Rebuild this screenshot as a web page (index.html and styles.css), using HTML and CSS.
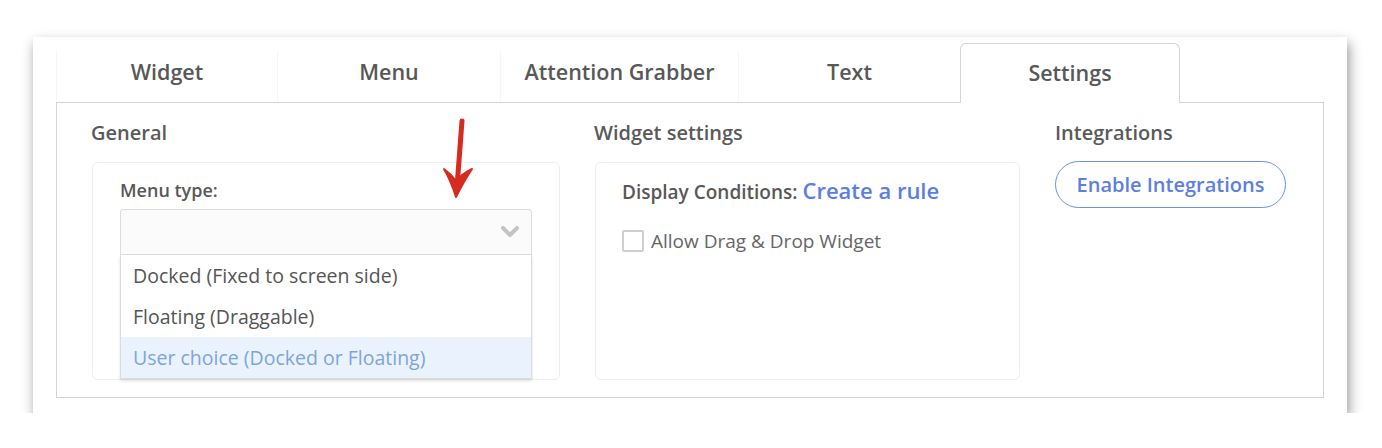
FILE: index.html
```html
<!DOCTYPE html>
<html lang="en">
<head>
    <meta charset="UTF-8">
    <meta name="viewport" content="width=device-width, initial-scale=1.0">
    <title>Widget Settings</title>
    <link rel="stylesheet" href="styles.css">
</head>
<body>
    <div class="frame">
        <!-- Tabs -->
        <div class="tabs">
            <div class="tab tab-widget">Widget</div>
            <div class="tab tab-menu">Menu</div>
            <div class="tab tab-grabber">Attention Grabber</div>
            <div class="tab tab-text">Text</div>
            <div class="tab tab-settings active">Settings</div>
        </div>

        <div class="panel">
            <!-- General -->
            <div class="column col-general">
                <h3>General</h3>
                <div class="card">
                    <label class="field-label">Menu type:</label>
                    <div class="select">
                        <svg class="chevron" width="18" height="12" viewBox="0 0 18 12">
                            <polyline points="2,2 9,9 16,2" fill="none" stroke="#c4c4c4" stroke-width="4" stroke-linecap="round" stroke-linejoin="round"/>
                        </svg>
                    </div>
                    <ul class="options">
                        <li>Docked (Fixed to screen side)</li>
                        <li>Floating (Draggable)</li>
                        <li class="hover">User choice (Docked or Floating)</li>
                    </ul>
                </div>
            </div>

            <!-- Widget settings -->
            <div class="column col-widget">
                <h3>Widget settings</h3>
                <div class="card">
                    <div class="conditions">Display Conditions: <a href="#" class="rule-link">Create a rule</a></div>
                    <label class="check">
                        <span class="box"></span>
                        Allow Drag &amp; Drop Widget
                    </label>
                </div>
            </div>

            <!-- Integrations -->
            <div class="column col-integrations">
                <h3>Integrations</h3>
                <button type="button" class="btn-outline">Enable Integrations</button>
            </div>
        </div>

        <!-- flecha roja de anotación -->
        <svg class="annot-arrow" width="32" height="82" viewBox="0 0 32 82">
            <path d="M20 4 L15 70" fill="none" stroke="#d62b1f" stroke-width="5" stroke-linecap="round"/>
            <path d="M2 52 Q9 57 14 64 Q20 57 30 52 Q22 64 14 80 Q9 64 2 52 Z" fill="#d62b1f" stroke="#d62b1f" stroke-width="2" stroke-linejoin="round"/>
        </svg>
    </div>
</body>
</html>
```

FILE: styles.css
```css
body {
    font-family: "Open Sans", sans-serif;
    background-color: #fff;
    margin: 0;
    color: #585858;
}
.frame {
    position: relative;
    box-sizing: border-box;
    width: 1314px;
    height: 376px;
    margin: 37px 0 0 33px;
    padding: 6px 23px 15px 23px;
    background-color: #fff;
    box-shadow: 2px 6px 12px rgba(0, 0, 0, 0.42);
}
.tabs {
    display: flex;
    align-items: flex-end;
    height: 59px;
}
.tab {
    box-sizing: border-box;
    height: 52px;
    padding-top: 8px;
    line-height: 28px;
    font-size: 21.5px;
    font-weight: 600;
    text-align: center;
    color: #585858;
    border-left: 1px solid #f6f6f6;
}
.tab-widget { width: 221px; }
.tab-menu { width: 223px; }
.tab-grabber { width: 238px; }
.tab-text { width: 222px; }
.tab-settings { width: 220px; }
.tab.active {
    position: relative;
    height: 60px;
    padding-top: 15px;
    margin-bottom: -1px;
    background-color: #fff;
    border: 1px solid #d4d4d4;
    border-bottom: none;
    border-radius: 6px 6px 0 0;
}
.panel {
    box-sizing: border-box;
    height: 296px;
    display: flex;
    padding: 18px 0 0 34px;
    border: 1px solid #d4d4d4;
}
.column h3 {
    margin: 0 0 17px;
    font-size: 20px;
    line-height: 24px;
    font-weight: 600;
    color: #5a5a5a;
}
.col-general { width: 469px; margin-right: 34px; }
.col-widget { width: 426px; margin-right: 35px; }
.col-integrations { width: 240px; }
.card {
    box-sizing: border-box;
    height: 218px;
    margin-left: 1px;
    border: 1px solid #eeeeee;
    border-radius: 6px;
}
.col-general .card {
    padding: 15px 27px 0;
}
.field-label {
    display: block;
    font-size: 18px;
    line-height: 24px;
    font-weight: 600;
    margin-bottom: 7px;
}
.select {
    box-sizing: border-box;
    height: 46px;
    display: flex;
    align-items: center;
    justify-content: flex-end;
    padding-right: 12px;
    background-color: #fbfbfb;
    border: 1px solid #dcdcdc;
    border-radius: 3px 3px 0 0;
}
.options {
    list-style: none;
    margin: 0;
    padding: 0;
    background-color: #fff;
    border: 1px solid #dcdcdc;
    border-top: none;
    box-shadow: 0 2px 3px rgba(0, 0, 0, 0.12);
}
.options li {
    height: 41px;
    line-height: 41px;
    padding-left: 12px;
    font-size: 19.5px;
    color: #555;
}
.options li.hover {
    background-color: #eaf3fd;
    color: #7ea5d9;
}
.col-widget .card {
    padding: 13px 26px 0;
}
.conditions {
    font-size: 19px;
    font-weight: 600;
    line-height: 28px;
}
.rule-link {
    color: #5b7de6;
    font-size: 22px;
    text-decoration: none;
}
.check {
    display: flex;
    align-items: center;
    margin-top: 22px;
    font-size: 19px;
    color: #666;
}
.check .box {
    box-sizing: border-box;
    width: 22px;
    height: 22px;
    margin-right: 7px;
    border: 2px solid #cfcfcf;
    border-radius: 2px;
}
.btn-outline {
    box-sizing: border-box;
    width: 231px;
    height: 47px;
    margin-top: -1px;
    background-color: #fff;
    border: 1.5px solid #6d8fe9;
    border-radius: 24px;
    font-family: "Open Sans", sans-serif;
    font-size: 20px;
    font-weight: 600;
    color: #5d7ee3;
    cursor: pointer;
}
.annot-arrow {
    position: absolute;
    left: 409px;
    top: 80px;
}
```
